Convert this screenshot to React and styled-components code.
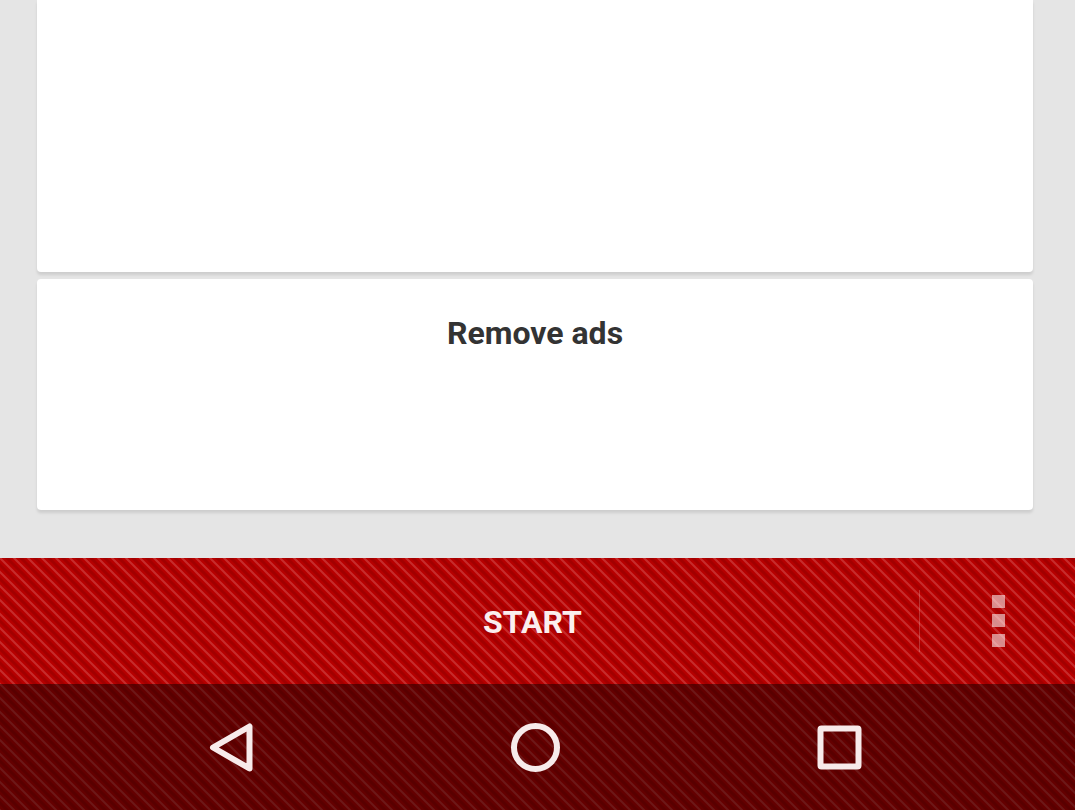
import React from "react";
import styled, { createGlobalStyle } from "styled-components";

const GlobalStyle = createGlobalStyle`
  * { box-sizing: border-box; }
  body {
    margin: 0;
    background: #e5e5e5;
    font-family: Roboto, "Liberation Sans", sans-serif;
  }
  button {
    font: inherit;
    border: 0;
    padding: 0;
    background: none;
    cursor: pointer;
  }
`;

const Screen = styled.div`
  min-height: 100vh;
  display: flex;
  flex-direction: column;
`;

const Content = styled.main`
  flex: 1;
  display: flex;
  flex-direction: column;
  gap: 7px;
  padding: 0 42px 48px 37px;
`;

const Card = styled.section`
  min-height: ${(p) => p.$height}px;
  flex-grow: ${(p) => (p.$grow ? 1 : 0)};
  padding-top: 36px;
  background: #fff;
  border-radius: ${(p) => (p.$grow ? "0 0 4px 4px" : "4px")};
  box-shadow: 0 3px 3px rgba(0, 0, 0, 0.1);
  text-align: center;
`;

const CardTitle = styled.h2`
  margin: 0;
  color: #333;
  font-size: 32px;
  line-height: 36px;
  font-weight: 700;
`;

const Bottom = styled.footer`
  position: relative;
  isolation: isolate;
  background: #b60000;
`;

const Stripes = styled.svg`
  position: absolute;
  inset: 0;
  z-index: -1;
  width: 100%;
  height: 100%;
`;

const ActionBar = styled.div`
  height: 126px;
  display: grid;
  grid-template-columns: 1fr 156px;
  align-items: center;
`;

const StartButton = styled.button`
  height: 100%;
  padding: 2px 0 0 146px;
  color: #fbeeee;
  font-size: 32px;
  line-height: 36px;
  font-weight: 700;
`;

const MenuButton = styled.button`
  height: 62px;
  display: flex;
  align-items: center;
  justify-content: center;
  border-left: 1px solid rgba(255, 255, 255, 0.2);
`;

const NavBar = styled.nav`
  height: 126px;
  display: flex;
  align-items: center;
  justify-content: center;
  gap: 176px;
  padding-right: 6px;
  background: rgba(0, 0, 0, 0.45);
`;

const NavButton = styled.button`
  width: 128px;
  height: 100%;
  display: flex;
  align-items: center;
  justify-content: center;
`;

const NavIcon = styled.svg`
  display: block;
  fill: none;
  stroke: #f7eaea;
  stroke-width: 6;
  stroke-linejoin: round;
`;

export default function App() {
  return (
    <Screen>
      <GlobalStyle />
      <Content>
        <Card $height={272} $grow />
        <Card $height={231}>
          <CardTitle>Remove ads</CardTitle>
        </Card>
      </Content>
      <Bottom>
        <Stripes aria-hidden="true">
          <defs>
            <pattern id="stripes" width="14" height="14" patternUnits="userSpaceOnUse">
              <path d="M-7 -14L28 21M-7 0L14 21M-7 -28L28 7" stroke="#a20000" strokeWidth="3" />
              <path d="M-14 -14L28 28M-14 0L14 28M0 -14L28 14" stroke="#c62c2c" strokeWidth="2" />
            </pattern>
          </defs>
          <rect width="100%" height="100%" fill="url(#stripes)" />
        </Stripes>
        <ActionBar>
          <StartButton type="button">START</StartButton>
          <MenuButton type="button" aria-label="More options">
            <svg width="14" height="54" fill="#fff" fillOpacity="0.55">
              <rect width="13" height="13" x="1" y="1" />
              <rect width="13" height="13" x="1" y="20" />
              <rect width="13" height="13" x="1" y="40" />
            </svg>
          </MenuButton>
        </ActionBar>
        <NavBar aria-label="System navigation">
          <NavButton type="button" aria-label="Back">
            <NavIcon width="50" height="50">
              <path d="M7 25.5L43.5 4.5V46.5Z" />
            </NavIcon>
          </NavButton>
          <NavButton type="button" aria-label="Home">
            <NavIcon width="50" height="50">
              <circle cx="25.5" cy="25.5" r="21.5" />
            </NavIcon>
          </NavButton>
          <NavButton type="button" aria-label="Recent apps">
            <NavIcon width="50" height="50">
              <rect x="6.5" y="6.5" width="38" height="38" rx="1" />
            </NavIcon>
          </NavButton>
        </NavBar>
      </Bottom>
    </Screen>
  );
}
